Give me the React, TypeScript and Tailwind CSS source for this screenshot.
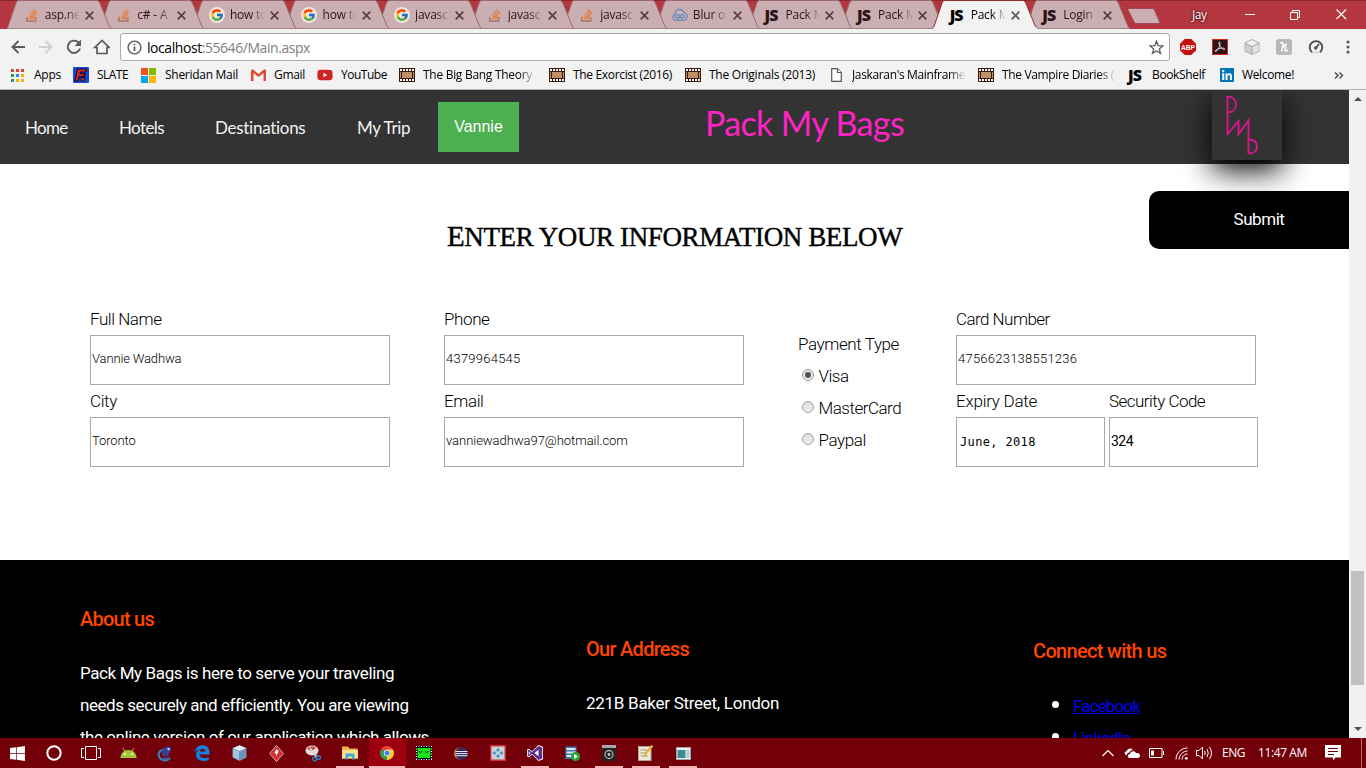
import React from "react";
import type { ReactNode } from "react";
import { FaStackOverflow, FaYoutube, FaLinkedin, FaWindows } from "react-icons/fa";
import { FcGoogle } from "react-icons/fc";

/* ---------- small icons ---------- */

function JsMark() {
  return <span className="-mt-px block w-[16px] font-['Open_Sans'] text-[16px] leading-4 font-extrabold tracking-[-0.9px]">JS</span>;
}

function GoogleMark() {
  return (
    <span className="flex size-4 items-center justify-center rounded-full bg-[#f0e4e5]">
      <FcGoogle size={14} />
    </span>
  );
}

function CloudMark() {
  return (
    <svg width="17" height="14" viewBox="0 0 17 14" fill="none" stroke="#5b86c4" strokeWidth="1.200">
      <path d="M4 12.500C2 12.500 1 11 1 9.500C1 8 2 7 3.300 6.600C3 3.500 5 1 8 1C10.300 1 11.800 2.300 12.400 4.300C14.500 4.500 16 6 16 8.500C16 11 14.500 12.500 12.500 12.500Z" />
      <path d="M8.500 8.500C7.500 7 6.800 6.500 6 6.500A1.900 1.900 0 0 0 6 10.300C7 10.300 7.700 9.700 8.500 8.500C9.300 7.200 10 6.500 11 6.500A1.900 1.900 0 0 1 11 10.300C10 10.300 9.300 9.700 8.500 8.500Z" />
    </svg>
  );
}

function StackMark() {
  return (
    <span className="relative flex">
      <FaStackOverflow size={14} color="#e8762d" />
      <svg className="absolute top-0 left-0" width="14" height="14" viewBox="0 0 14 14" fill="none">
        <path d="M1.600 9V13.300H10.400V9" stroke="#a08484" strokeWidth="1.400" />
      </svg>
    </span>
  );
}

function FilmMark() {
  return (
    <svg width="16" height="14" viewBox="0 0 16 14">
      <rect width="16" height="14" fill="#3b1a0c" />
      <rect x="3" y="4" width="10" height="6" fill="#bd9068" />
      <path d="M1 2h14M1 12h14" stroke="#fff" strokeWidth="2" strokeDasharray="2 1" />
      <path d="M1.500 4v6M14.500 4v6" stroke="#bd9068" strokeWidth="1" />
    </svg>
  );
}

function PageMark() {
  return (
    <svg width="11" height="14" viewBox="0 0 11 14" fill="#fff" stroke="#555" strokeWidth="1.200">
      <path d="M0.700 0.700H6.500L10.300 4.500V13.300H0.700Z" />
      <path d="M6.500 0.700V4.500H10.300" />
    </svg>
  );
}

function GmailMark() {
  return (
    <svg width="15" height="12" viewBox="0 0 15 12">
      <rect x="1" y="0.500" width="13" height="11" fill="#f6f6f6" />
      <path d="M0 1.500L1.500 0L7.500 5L13.500 0L15 1.500V12H12.500V4L7.500 8L2.500 4V12H0Z" fill="#dd4b39" />
    </svg>
  );
}

function AppsMark() {
  const dots = ["#e34133", "#e34133", "#e34133", "#2d9a4c", "#3b7ded", "#f5b400", "#2d9a4c", "#f5b400", "#f5b400"];
  return (
    <svg width="13" height="13" viewBox="0 0 13 13">
      {dots.map((c, i) => (
        <rect key={i} x={(i % 3) * 5} y={Math.floor(i / 3) * 5} width="3" height="3" fill={c} />
      ))}
    </svg>
  );
}

function SlateMark() {
  return (
    <svg width="16" height="16" viewBox="0 0 16 16">
      <rect width="16" height="16" rx="1" fill="#1746d8" />
      <path d="M4.500 2H13.500L12.700 5H7.500L7.100 6.700H12L11.200 9.500H6.300L5.200 14H2Z" fill="#e2261b" stroke="#120b2a" strokeWidth="1.200" />
      <path d="M8.500 10.500H12L11 14H8Z" fill="#e2261b" stroke="#120b2a" strokeWidth="1" />
    </svg>
  );
}

function MicrosoftMark() {
  return (
    <svg width="15" height="15" viewBox="0 0 15 15">
      <path fill="#f1511b" d="M0 0h7v7H0z" />
      <path fill="#80ba01" d="M8 0h7v7H8z" />
      <path fill="#00a4ef" d="M0 8h7v7H0z" />
      <path fill="#fbb901" d="M8 8h7v7H8z" />
    </svg>
  );
}

/* ---------- browser chrome ---------- */

const TAB_START = 6.7;
const TAB_PITCH = 92.6;
const ACTIVE_TAB = 10;

const tabs: { icon: ReactNode; label: string }[] = [
  { icon: <StackMark />, label: "asp.ne" },
  { icon: <StackMark />, label: "c# - A" },
  { icon: <GoogleMark />, label: "how to" },
  { icon: <GoogleMark />, label: "how to" },
  { icon: <GoogleMark />, label: "javasc" },
  { icon: <StackMark />, label: "javasc" },
  { icon: <StackMark />, label: "javasc" },
  { icon: <CloudMark />, label: "Blur o" },
  { icon: <JsMark />, label: "Pack M" },
  { icon: <JsMark />, label: "Pack M" },
  { icon: <JsMark />, label: "Pack M" },
  { icon: <JsMark />, label: "Login" },
];

function TabShapes() {
  const order = tabs.map((_, i) => i).reverse().filter((i) => i !== ACTIVE_TAB);
  order.push(ACTIVE_TAB);
  return (
    <svg className="absolute top-0 left-0" width="1366" height="29" viewBox="0 0 1366 29">
      {order.map((i) => {
        const x = TAB_START + i * TAB_PITCH;
        const active = i === ACTIVE_TAB;
        return (
          <path
            key={i}
            d={`M${x} 28.500L${x + 1.500} 26L${x + 9} 4C${x + 10} 1.500 ${x + 10.500} 0.500 ${x + 12} 0.500H${x + 90}C${x + 92} 0.500 ${x + 92.500} 2 ${x + 93.500} 4L${x + 102.500} 26L${x + 104.500} 28.500`}
            fill={active ? "#f2f2f2" : "#cbaeb1"}
            stroke={active ? "#8d2a34" : "#9a6a70"}
            strokeWidth="1"
          />
        );
      })}
      <path d="M7 28.500H933M1037 28.500H1127" stroke="#a08286" />
      <path d="M933 28.500H1037" stroke="#f2f2f2" strokeWidth="1.500" />
      <path d="M1128.500 8.500H1152.500Q1154 8.500 1154.500 10L1159.500 21.500Q1160 23.500 1158.500 23.500H1136Q1134.500 23.500 1134 22L1128 10Q1127.500 8.500 1128.500 8.500Z" fill="#cbaeb1" stroke="#9a4a52" />
    </svg>
  );
}

function TabStrip() {
  return (
    <div className="relative flex h-[29px] bg-[#b4363f] shadow-[inset_0_1px_0_#8f2630]">
      <TabShapes />
      <div className="relative flex h-[29px] w-[1118px] shrink-0 pl-[6.7px]">
        {tabs.map((t, i) => (
          <div key={i} className={`flex w-[92.6px] shrink-0 items-center pt-px pl-[17px] ${i === ACTIVE_TAB ? "text-black" : "text-[#2b1216]"}`}>
            <span className="flex w-4 shrink-0 justify-center">{t.icon}</span>
            <span className="ml-[5px] w-[38px] shrink-0 text-[12px] tracking-[-0.2px] whitespace-nowrap [mask-image:linear-gradient(to_right,#000_55%,transparent_92%)]">
              {t.label}
            </span>
            <svg className="ml-[2px] shrink-0" width="9" height="9" viewBox="0 0 9 9" stroke={i === ACTIVE_TAB ? "#5a5a5a" : "#5e3f43"} strokeWidth="1.800">
              <path d="M0.700 0.700L8.300 8.300M8.300 0.700L0.700 8.300" />
            </svg>
          </div>
        ))}
      </div>
      <div className="relative ml-[74px] flex items-center text-white">
        <span className="w-[16px] text-[12px] tracking-[-0.5px] [text-shadow:0_0_2px_#3a0b10,0_0_2px_#3a0b10]">Jay</span>
        <svg className="ml-[37px]" width="102" height="13" viewBox="0 0 102 13" fill="none" stroke="#fff">
          <path d="M0 6.500H10" />
          <path d="M45.500 4.500H52.500V11.500H45.500ZM47.500 4.500V2.500H54.500V9.500H52.500" />
          <path d="M91.500 1.500L101 11M101 1.500L91.500 11" strokeWidth="1.200" />
        </svg>
      </div>
    </div>
  );
}

function Toolbar() {
  return (
    <div className="flex h-[32px] items-end bg-[#f2f2f2] pl-[10px]">
      <svg className="mb-[5px] shrink-0" width="100" height="18" viewBox="0 0 100 18" fill="none" strokeWidth="1.900">
        <path d="M15 9H2.500M8.500 3L2.500 9L8.500 15" stroke="#5a5a5a" />
        <path d="M29 9H41.500M35.500 3L41.500 9L35.500 15" stroke="#cfcfcf" />
        <path d="M68.500 4.500A6.200 6.200 0 1 0 70 10.500" stroke="#5a5a5a" />
        <path d="M71 1.500V8H64.500Z" fill="#5a5a5a" />
        <path d="M92 2.500L84.800 9.500H87V15.500H97V9.500H99.200Z" stroke="#5a5a5a" strokeWidth="1.700" />
      </svg>
      <div className="ml-[10px] flex h-[28px] w-[1050px] shrink-0 items-center rounded-[3px] border border-[#a9a9a9] bg-white pl-[6px]">
        <svg width="15" height="15" viewBox="0 0 15 15" fill="none" stroke="#5a5a5a" strokeWidth="1.400">
          <circle cx="7.500" cy="7.500" r="6.400" />
          <path d="M7.500 6.500V11M7.500 3.700V5.300" strokeWidth="1.700" />
        </svg>
        <span className="ml-[5px] text-[14px] tracking-[-0.44px] whitespace-nowrap">
          localhost<span className="text-[#808080]">:55646/Main.aspx</span>
        </span>
        <svg className="mr-[5px] ml-auto" width="15" height="15" viewBox="0 0 15 15" fill="none" stroke="#5a5a5a" strokeWidth="1.300">
          <path d="M7.500 1.300L9.200 5.600L13.900 5.900L10.300 8.900L11.500 13.400L7.500 10.900L3.500 13.400L4.700 8.900L1.100 5.900L5.800 5.600Z" />
        </svg>
      </div>
      <div className="mb-[6px] ml-[10px] flex items-center">
        <svg width="16" height="16" viewBox="0 0 16 16">
          <path d="M4.700 0H11.300L16 4.700V11.300L11.300 16H4.700L0 11.300V4.700Z" fill="#c70d0d" />
          <text x="8" y="10.800" textAnchor="middle" fill="#fff" fontSize="7.500" fontWeight="700" textLength="14" lengthAdjust="spacingAndGlyphs" fontFamily="Liberation Sans, sans-serif">ABP</text>
        </svg>
        <svg className="ml-[16px]" width="16" height="16" viewBox="0 0 16 16" fill="none">
          <rect x="0.500" y="0.500" width="15" height="15" fill="#2c1418" stroke="#d6261a" />
          <path d="M7.200 3C8.500 3 8 6 7 8.500S4 13 3.200 12.300S6 9.500 9 9.200S13 9.500 12.600 10.300S9.500 9.500 8.200 7.300S6.500 3 7.200 3Z" stroke="#e9d5d5" strokeWidth="1" />
        </svg>
        <svg className="ml-[16px]" width="16" height="16" viewBox="0 0 16 16">
          <path d="M8 0L15.500 3.500V12.500L8 16L0.500 12.500V3.500Z" fill="#a8a8a8" />
          <path d="M8 1L14.500 4L8 7L1.500 4Z" fill="#efefef" />
          <path d="M1.300 5L7.500 8V15L1.300 12Z" fill="#cfcfcf" />
          <path d="M8.500 8L14.700 5V12L8.500 15Z" fill="#e4e4e4" />
        </svg>
        <svg className="ml-[16px]" width="16" height="16" viewBox="0 0 16 16">
          <rect width="16" height="16" rx="3" fill="#b9b9b9" />
          <path d="M4.500 4.500C5.500 3 7.500 3 7 5.500L5.700 12.500M6.200 9.500C7 6.500 9.800 6.500 9.500 9C9.300 10.500 8.700 12.500 10.300 12C11.300 11.700 11.800 10.500 11.800 10.500M7 6.500C9 6.500 10.500 5.500 10.500 4.500" fill="none" stroke="#fff" strokeWidth="1.500" />
        </svg>
        <svg className="ml-[16px]" width="16" height="16" viewBox="0 0 16 16" fill="none" stroke="#4d4d4d" strokeWidth="1.800">
          <path d="M4.200 13.400A6.300 6.300 0 1 1 11.800 13.400" />
          <path d="M7.500 9.500L11 5" strokeWidth="1.800" />
          <circle cx="7.700" cy="9" r="0.800" fill="#4d4d4d" />
          <path d="M5 13.500H11" stroke="#d7d7d7" strokeWidth="2" />
        </svg>
        <svg className="ml-[22px]" width="4" height="14" viewBox="0 0 4 14" fill="#5a5a5a">
          <circle cx="2" cy="2" r="1.600" />
          <circle cx="2" cy="7" r="1.600" />
          <circle cx="2" cy="12" r="1.600" />
        </svg>
      </div>
    </div>
  );
}

function Bookmark({ icon, label, cell, indent = 23 }: { icon: ReactNode; label: ReactNode; cell: string; indent?: number }) {
  const gap = indent === 24 ? "w-[24px]" : indent === 21 ? "w-[21px]" : "w-[23px]";
  return (
    <div className={`flex shrink-0 items-center text-[12px] whitespace-nowrap ${cell}`}>
      <span className={`flex shrink-0 ${gap}`}>{icon}</span>
      {label}
    </div>
  );
}

function BookmarksBar() {
  const fade = "overflow-hidden [mask-image:linear-gradient(to_right,#000_85%,transparent_100%)]";
  return (
    <div className="flex h-[29px] items-center border-b border-[#b6b4b6] bg-[#f2f2f2] pl-[11px]">
      <Bookmark cell="w-[62px] tracking-[-0.25px]" icon={<AppsMark />} label="Apps" />
      <Bookmark cell="w-[68px] tracking-[-0.54px]" indent={24} icon={<SlateMark />} label="SLATE" />
      <Bookmark cell="w-[110px] tracking-[-0.28px]" indent={24} icon={<MicrosoftMark />} label="Sheridan Mail" />
      <Bookmark cell="w-[66px] tracking-[-0.31px]" icon={<GmailMark />} label="Gmail" />
      <Bookmark cell="w-[82px] tracking-[-0.48px]" indent={24} icon={<FaYoutube size={16} color="#cf2426" />} label="YouTube" />
      <Bookmark cell="w-[150px] tracking-[-0.29px]" indent={24} icon={<FilmMark />} label={<span className={`w-[113px] ${fade}`}>The Big Bang Theory</span>} />
      <Bookmark cell="w-[136px] tracking-[-0.33px]" indent={24} icon={<FilmMark />} label="The Exorcist (2016)" />
      <Bookmark cell="w-[146px] tracking-[-0.25px]" indent={24} icon={<FilmMark />} label="The Originals (2013)" />
      <Bookmark cell="w-[147px] tracking-[-0.36px]" indent={21} icon={<PageMark />} label={<span className={`w-[114px] ${fade}`}>Jaskaran's Mainframe</span>} />
      <Bookmark cell="w-[150px] tracking-[-0.35px]" indent={24} icon={<FilmMark />} label={<span className={`w-[114px] ${fade}`}>The Vampire Diaries (</span>} />
      <Bookmark cell="w-[91px] tracking-[-0.36px]" indent={24} icon={<JsMark />} label="BookShelf" />
      <Bookmark cell="w-[115px] tracking-[-0.36px]" icon={<FaLinkedin size={16} color="#0077b5" />} label="Welcome!" />
      <svg width="10" height="7" viewBox="0 0 10 7" fill="none" stroke="#444" strokeWidth="1.400">
        <path d="M1 0.500L4 3.500L1 6.500M5.500 0.500L8.500 3.500L5.500 6.500" />
      </svg>
    </div>
  );
}

/* ---------- web page ---------- */

function Logo() {
  return (
    <div className="flex size-[70px] bg-[#333] shadow-[0_10px_30px_#000]">
      <svg width="70" height="70" viewBox="0 0 70 70" fill="none" stroke="#d4178a" strokeWidth="1.900">
        <path d="M15.500 6V44L26.500 31V44L36.500 30.500V64" />
        <path d="M15.500 6.500C21 6.500 24 10 24 14.500S21 22.500 15.500 22.500" />
        <path d="M36.500 49.500C42 49.500 45 52 45 56.500S42 63.500 36.500 63.500" />
      </svg>
    </div>
  );
}

function Header() {
  return (
    <header className="flex h-[74px] shrink-0 bg-[#333]">
      <nav className="flex h-[74px] w-[705px] shrink-0 items-start font-['Lato'] text-[17px] text-[#f2f2f2]">
        <span className="mt-[25px] ml-[25px] w-[94px] tracking-[-0.7px]">Home</span>
        <span className="mt-[25px] w-[96px] tracking-[-0.6px]">Hotels</span>
        <span className="mt-[25px] w-[142px] tracking-[-0.28px]">Destinations</span>
        <span className="mt-[25px] w-[81px] tracking-[-0.39px]">My Trip</span>
        <button className="mt-[12px] h-[50px] w-[81px] bg-[#4caf50] font-['Liberation_Sans'] text-[16px] text-white">Vannie</button>
      </nav>
      <h1 className="mt-[7px] w-[507px] shrink-0 font-['Lato'] text-[34px] tracking-[-0.63px] text-[#ff22c4]">Pack My Bags</h1>
      <Logo />
    </header>
  );
}

const frame = "h-[50px] border border-[#a9a9a9] bg-white text-black outline-none";
const box = `${frame} px-px pb-[3px] text-[13px] font-light`;

function Radio({ label, on = false, spacing }: { label: string; on?: boolean; spacing: string }) {
  return (
    <label className="flex h-8 items-center pl-1">
      <span className="mr-[4.5px] -mt-0.5 flex size-3 items-center justify-center rounded-full border border-[#a3a3a3] bg-[linear-gradient(#dcdcdc,#f0f0f0)]">
        {on && <span className="size-1.5 rounded-full bg-[#555]" />}
      </span>
      <span className={spacing}>{label}</span>
    </label>
  );
}

function BookingForm() {
  return (
    <section className="h-[396px] shrink-0 bg-white">
      <div className="flex h-[139px] pt-[27px]">
        <h2 className="mt-[29px] ml-[447px] w-[702px] shrink-0 font-['Liberation_Serif'] text-[27px] leading-8 font-normal tracking-[-0.38px] whitespace-nowrap [-webkit-text-stroke:0.4px_#000]">
          <span className="text-[29px]">E</span>NTER YOUR INFORMATION BELOW
        </h2>
        <button className="h-[58px] w-[220px] shrink-0 rounded-[10px] bg-black text-[17px] tracking-[-0.44px] text-white">Submit</button>
      </div>
      <div className="flex pl-[90px] text-[17px] leading-8 font-light">
        <div className="flex w-[354px] flex-col">
          <label className="tracking-[-0.45px]">Full Name</label>
          <input className={`${box} w-[300px] tracking-[-0.15px]`} defaultValue="Vannie Wadhwa" />
          <label className="tracking-[-0.4px]">City</label>
          <input className={`${box} w-[300px] tracking-[-0.1px]`} defaultValue="Toronto" />
        </div>
        <div className="flex w-[354px] flex-col">
          <label className="tracking-[-0.4px]">Phone</label>
          <input className={`${box} w-[300px] tracking-[0.24px]`} defaultValue="4379964545" />
          <label className="tracking-[-0.4px]">Email</label>
          <input className={`${box} w-[300px] tracking-[-0.04px]`} defaultValue="vanniewadhwa97@hotmail.com" />
        </div>
        <div className="flex w-[158px] flex-col pt-[25px]">
          <span className="tracking-[-0.4px]">Payment Type</span>
          <Radio label="Visa" on spacing="tracking-[-0.5px]" />
          <Radio label="MasterCard" spacing="tracking-[-0.5px]" />
          <Radio label="Paypal" spacing="tracking-[-0.4px]" />
        </div>
        <div className="flex flex-col">
          <label className="tracking-[-0.55px]">Card Number</label>
          <input className={`${box} w-[300px] tracking-[0.24px]`} defaultValue="4756623138551236" />
          <div className="flex gap-[4px]">
            <div className="flex w-[149px] flex-col">
              <label className="tracking-[-0.25px]">Expiry Date</label>
              <div className={`${frame} pl-[3px] font-['DejaVu_Sans_Mono'] text-[12px] leading-[48px] font-normal tracking-[0.35px]`}>June, 2018</div>
            </div>
            <div className="flex w-[149px] flex-col">
              <label className="tracking-[-0.53px]">Security Code</label>
              <input className={`${frame} w-[149px] px-px pb-[3px] text-[14px] font-normal tracking-[-0.5px]`} defaultValue="324" />
            </div>
          </div>
        </div>
      </div>
    </section>
  );
}

function Footer() {
  const heading = "text-[20px] leading-8 font-medium text-[#ff4500]";
  return (
    <footer className="flex h-[400px] shrink-0 bg-black pl-[80px] text-[17px] leading-8 whitespace-nowrap text-white">
      <div className="w-[506px] pt-[43px]">
        <h3 className={`${heading} tracking-[-0.75px]`}>About us</h3>
        <p className="mt-[22px] tracking-[-0.45px]">
          <span className="block tracking-[-0.39px]">Pack My Bags is here to serve your traveling</span>
          needs securely and efficiently. You are viewing
          <br />
          the online version of our application which allows
        </p>
      </div>
      <div className="w-[447px] pt-[73px]">
        <h3 className={`${heading} tracking-[-0.72px]`}>Our Address</h3>
        <p className="mt-[22px] tracking-[-0.28px]">221B Baker Street, London</p>
      </div>
      <div className="pt-[75px]">
        <h3 className={`${heading} tracking-[-0.68px]`}>Connect with us</h3>
        <ul className="mt-[22px] list-disc pl-[40px] tracking-[-0.85px] marker:text-[23px]">
          <li className="h-8"><a className="text-[#0000ee] underline">Facebook</a></li>
          <li className="h-8"><a className="text-[#0000ee] underline">LinkedIn</a></li>
        </ul>
      </div>
    </footer>
  );
}

function Scrollbar() {
  return (
    <div className="flex w-[17px] shrink-0 flex-col items-center bg-[#f1f1f1]">
      <svg className="mt-[7px]" width="8" height="4" viewBox="0 0 8 4" fill="#505050"><path d="M4 0L8 4H0Z" /></svg>
      <div className="mt-[470px] h-[114px] w-[13px] bg-[#c1c1c1]" />
      <svg className="mt-[42px]" width="8" height="4" viewBox="0 0 8 4" fill="#505050"><path d="M0 0H8L4 4Z" /></svg>
    </div>
  );
}

/* ---------- taskbar ---------- */

const apps: { art: ReactNode; open?: boolean; active?: boolean }[] = [
  { art: <FaWindows size={17} color="#fff" /> },
  { art: <svg width="16" height="16" viewBox="0 0 16 16" fill="none" stroke="#fff" strokeWidth="2"><circle cx="8" cy="8" r="6.700" /></svg> },
  { art: <svg width="20" height="14" viewBox="0 0 20 14" fill="none" stroke="#fff"><path d="M4.500 0.500H15.500V13.500H4.500ZM3 2.500H0.500V11.500H3M17 2.500H19.500V11.500H17" /></svg> },
  { art: <svg width="17" height="10" viewBox="0 0 17 10"><path d="M0.500 10C0.500 5 4 2 8.500 2S16.500 5 16.500 10Z" fill="#a4c639" /><path d="M3 0L5 3.500M14 0L12 3.500" stroke="#a4c639" /><circle cx="5" cy="6" r="0.900" fill="#fff" /><circle cx="12" cy="6" r="0.900" fill="#fff" /></svg> },
  { art: <svg width="16" height="17" viewBox="0 0 16 17" fill="none"><path d="M7 4.500C2.500 5 1 8 2 11.500C3.500 16 10 16.500 13 13" stroke="#3a7fb0" strokeWidth="2.200" /><path d="M5 6C6 2 11 0 14 2.500C14.500 5 13 8 10.500 9L5 8.500Z" fill="#3440a0" /><path d="M5 10H12M6 13H12" stroke="#3a3f8e" strokeWidth="2" /><circle cx="11.500" cy="4" r="1.100" fill="#fff" /></svg> },
  { art: <svg width="16" height="16" viewBox="0 0 16 16"><path d="M0.500 7.500C1 3 4.500 0.300 8.500 0.300C13 0.300 15.600 3.500 15.600 7.500V9.500H5.500C5.700 12 7.800 13 10 13C12 13 13.500 12.400 14.700 11.700V15C13 15.700 11.500 16 9.500 16C5 16 2 13.500 2 9.800C2 7.500 3.200 5.600 5.200 4.600C3.200 4.900 1.500 6 0.500 7.500ZM5.700 6.600H11.300C11.300 4.700 10.200 3.700 8.600 3.700S5.900 4.800 5.700 6.600Z" fill="#1080dd" /></svg> },
  { art: <svg width="15" height="16" viewBox="0 0 15 16"><path d="M7.500 0L14.500 3V12.500L7.500 16L0.500 12.500V3Z" fill="#6f94ba" /><path d="M7.500 0.500L14 3.200L7.500 6L1 3.200Z" fill="#e6f0f8" /><path d="M1 4.200L7 6.500V15L1 12Z" fill="#a7c4df" /></svg> },
  { art: <svg width="15" height="17" viewBox="0 0 15 17"><path d="M7.500 0.500L14.500 8.500L7.500 16.500L0.500 8.500Z" fill="#cc2f36" stroke="#e8a3a3" /><path d="M7 4.500C9 4 10 6 9 7.500L7 12L7.500 9L5.500 8Z" fill="#fff" /></svg> },
  { art: <svg width="16" height="17" viewBox="0 0 16 17"><ellipse cx="7" cy="5.500" rx="6.500" ry="5" fill="#e4dedd" /><path d="M2 4C5 1 9 1 11 3L7 6Z" fill="#cc4a3b" /><path d="M5 3L12 12M12 4L10 12" stroke="#d9d9d9" strokeWidth="1.500" /><g fill="none" stroke="#2386c8" strokeWidth="1.400"><circle cx="9.500" cy="14" r="1.900" /><circle cx="13.500" cy="12.500" r="1.900" /></g></svg> },
  { art: <svg width="16" height="14" viewBox="0 0 16 14"><path d="M0 0.500H6L7.500 2.500H15.500V12.500H0Z" fill="#e9b64c" /><path d="M0 4H16V12.500H0Z" fill="#fcdf8c" /><path d="M3.500 13.500V7.500H12.500V13.500H10V10.500H6V13.500Z" fill="#3ba8df" /></svg>, open: true },
  { art: <svg width="14" height="14" viewBox="0 0 14 14"><path d="M7 7L0.940 3.500A7 7 0 0 1 13.060 3.500Z" fill="#e0463a" /><path d="M7 7L0.940 3.500A7 7 0 0 0 7 14Z" fill="#2fa350" /><path d="M7 7L7 14A7 7 0 0 0 13.060 3.500H7Z" fill="#fbcb32" /><circle cx="7" cy="7" r="3.200" fill="#f4f4f4" /><circle cx="7" cy="7" r="2.500" fill="#3f82ea" /></svg>, open: true, active: true },
  { art: <svg width="16" height="14" viewBox="0 0 16 14"><rect width="16" height="14" fill="#000" /><path d="M0 0.500H16M0 13.500H16M0.500 0V14M15.500 0V14" stroke="#fff" strokeDasharray="1 1.500" /><rect x="1.500" y="2" width="13" height="10" fill="#17e317" /><path d="M3 5L4.500 7L6 5M9 5L10.500 7L12 5" fill="none" stroke="#0a4a0a" /></svg> },
  { art: <svg width="14" height="13" viewBox="0 0 14 13"><circle cx="6" cy="6.500" r="6" fill="#e58a1f" /><circle cx="7.500" cy="6.500" r="6.200" fill="#31265e" /><path d="M1.500 4.500H13.500M1.300 6.600H13.700M1.500 8.700H13.500" stroke="#e9e7f3" /></svg> },
  { art: <svg width="16" height="16" viewBox="0 0 16 16"><rect x="0.750" y="0.750" width="14.500" height="14.500" fill="#c9d3d8" stroke="#cf2c3b" strokeWidth="1.500" /><path d="M8 3L10 5L8 7L6 5ZM4.500 6L6.500 8L4.500 10L2.500 8ZM11.500 6L13.500 8L11.500 10L9.500 8ZM8 9L10 11L8 13L6 11Z" fill="#3f9ac4" /></svg> },
  { art: <svg width="16" height="16" viewBox="0 0 16 16"><path d="M11.500 0L16 1.800V14.200L11.500 16L5 9.800L1.800 12.200L0 11.300V4.700L1.800 3.800L5 6.200Z" fill="#fff" /><path d="M11.500 1L15.200 2.400V13.600L11.500 15L5 9L1.800 11.300L0.800 10.800V5.200L1.800 4.700L5 7ZM11.500 4.800L7.500 8L11.500 11.200ZM1.800 6.200V9.800L3.500 8Z" fill="#5d2d91" fillRule="evenodd" /></svg>, open: true },
  { art: <svg width="15" height="15" viewBox="0 0 15 15"><path d="M0.500 0.500H11.500V13H0.500Z" fill="#3c79b4" /><path d="M1.500 2H10.500V4H1.500ZM1.500 5.500H10.500V7.500H1.500ZM1.500 9H10.500V11H1.500Z" fill="#dce9ef" /><circle cx="10.500" cy="10.500" r="4.500" fill="#26a533" /><path d="M9 8L13 10.500L9 13Z" fill="#fff" /></svg> },
  { art: <svg width="14" height="16" viewBox="0 0 14 16"><rect width="14" height="16" rx="1" fill="#232323" /><rect width="14" height="3" fill="#a9a9a9" /><circle cx="7" cy="9.500" r="4" fill="none" stroke="#aaa" strokeWidth="1.300" /><circle cx="7" cy="9.500" r="1.400" fill="#ccc" /></svg>, open: true },
  { art: <svg width="16" height="16" viewBox="0 0 16 16"><rect x="0.500" y="1.500" width="12.500" height="14" fill="#ece9d8" stroke="#a9a894" /><path d="M2.500 5H9M2.500 8H8M2.500 11H10" stroke="#98987f" /><path d="M14.500 0.500L8 8L6.500 11.500" stroke="#e4b32c" strokeWidth="2.200" fill="none" /></svg>, open: true },
  { art: <svg width="15" height="13" viewBox="0 0 15 13"><rect x="0.500" y="0.500" width="14" height="12" fill="#eef0f2" stroke="#a6a6a6" /><rect x="1.500" y="3" width="8" height="8" fill="#3c8e8e" /><rect x="10.500" y="3" width="3" height="8" fill="#a8d0e0" /></svg>, open: true },
];

function Taskbar() {
  return (
    <div className="flex h-[30px] shrink-0 items-stretch bg-[#730009] text-white">
      <div className="-ml-[1.5px] flex">
        {apps.map((a, i) => (
          <div key={i} className={`flex w-[37px] justify-center ${a.active ? "bg-[#9c000e]" : ""}`}>
            <div className={`flex h-[30px] items-center justify-center ${a.active ? "w-[36px]" : "w-[28px]"} ${a.open ? "border-b-2 border-[#f7b3ba] pt-0.5" : ""}`}>{a.art}</div>
          </div>
        ))}
      </div>
      <div className="ml-auto flex items-center text-[12px]">
        <svg width="12" height="8" viewBox="0 0 12 8" fill="none" stroke="#fff" strokeWidth="1.200"><path d="M0.500 7L6 1.500L11.500 7" /></svg>
        <svg className="ml-[10px]" width="16" height="10" viewBox="0 0 16 10" fill="#fff"><path d="M1.500 6.500C0 5.500 0.500 3.500 2.500 3.200C3.500 0 7.500-0.500 9 2C7 2 6 3 5.500 4.500C3.500 4.500 2.700 6 3 7.500Z" /><path d="M5.500 10C3 9.500 3.500 6 6 6C6.500 3 10.500 2 12 5C14.500 4.500 16 6 16 7.500C16 9 15 10 14 10Z" /></svg>
        <svg className="ml-[9px]" width="15" height="10" viewBox="0 0 15 10" fill="none" stroke="#fff"><path d="M0.500 0.500H13V9.500H0.500ZM14.500 3V7" /><path d="M2 2.500H5V7.500H2Z" fill="#fff" stroke="none" /></svg>
        <svg className="ml-[11px]" width="13" height="13" viewBox="0 0 13 13" fill="none" stroke="#fff" strokeWidth="1"><path d="M1 12.500C1 6 6 1 12.500 1M4 12.500C4 8 8 4 12.500 4M7 12.500C7 9.500 9.500 7 12.500 7" /><circle cx="11.300" cy="11.300" r="1.400" fill="#fff" stroke="none" /></svg>
        <svg className="ml-[8px]" width="17" height="14" viewBox="0 0 17 14" fill="none" stroke="#fff"><path d="M0.500 4.500H3L6.500 1V13L3 9.500H0.500ZM8.500 5Q10 7 8.500 9M11 3Q13.500 7 11 11M13.500 1Q17.500 7 13.500 13" /></svg>
        <span className="ml-[9px] w-[36px] tracking-[-0.48px]">ENG</span>
        <span className="w-[67px] tracking-[-0.39px] whitespace-nowrap">11:47 AM</span>
        <svg width="16" height="16" viewBox="0 0 16 16"><path d="M0 0H16V12.500H10.500L8 15.500V12.500H0Z" fill="#fff" /><path d="M3 3.500H13M3 6.500H13M3 9.500H9" stroke="#730009" /></svg>
        <span className="mr-1 ml-[20px] h-[30px] w-px bg-[#b0686e]" />
      </div>
    </div>
  );
}

export default function App() {
  return (
    <div className="flex h-[768px] w-[1366px] flex-col overflow-hidden bg-white font-['Open_Sans',sans-serif] text-black">
      <TabStrip />
      <Toolbar />
      <BookmarksBar />
      <div className="flex h-[648px] shrink-0">
        <main className="flex w-[1349px] shrink-0 flex-col overflow-hidden font-['Roboto',sans-serif]">
          <div className="relative z-10">
            <Header />
          </div>
          <BookingForm />
          <Footer />
        </main>
        <Scrollbar />
      </div>
      <Taskbar />
    </div>
  );
}
